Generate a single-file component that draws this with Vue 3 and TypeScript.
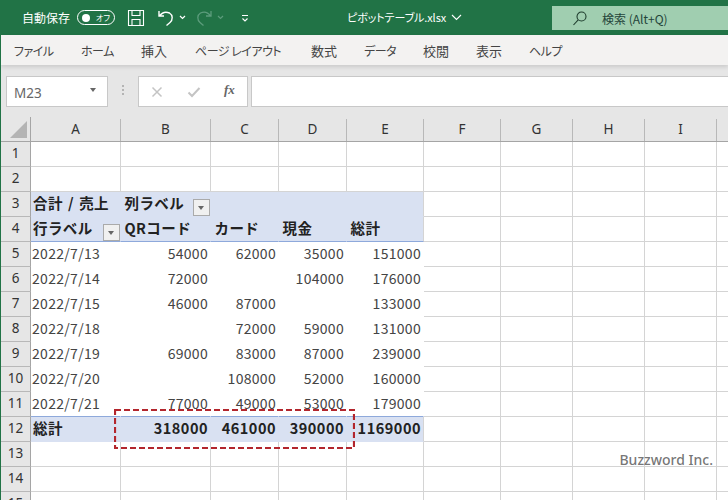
<script setup lang="ts">
const cols = ['A','B','C','D','E','F','G','H','I','']
type Cell = { t?: string; right?: boolean; bold?: boolean; filter?: boolean }
const blank: Cell = {}
const dataRows: [string, string, string, string, string][] = [
  ['2022/7/13','54000','62000','35000','151000'],
  ['2022/7/14','72000','','104000','176000'],
  ['2022/7/15','46000','87000','','133000'],
  ['2022/7/18','','72000','59000','131000'],
  ['2022/7/19','69000','83000','87000','239000'],
  ['2022/7/20','','108000','52000','160000'],
  ['2022/7/21','77000','49000','53000','179000'],
]
const rows: { n: number; kind: string; cells: Cell[] }[] = []
rows.push({ n: 1, kind: '', cells: [] })
rows.push({ n: 2, kind: '', cells: [] })
rows.push({ n: 3, kind: 'pv', cells: [{ t: '合計 / 売上', bold: true }, { t: '列ラベル', bold: true, filter: true }, blank, blank, blank] })
rows.push({ n: 4, kind: 'pv hd', cells: [{ t: '行ラベル', bold: true, filter: true }, { t: 'QRコード', bold: true }, { t: 'カード', bold: true }, { t: '現金', bold: true }, { t: '総計', bold: true }] })
dataRows.forEach((r, i) => rows.push({ n: 5 + i, kind: i === 6 ? 'data last' : 'data', cells: [{ t: r[0] }, ...r.slice(1).map((t) => ({ t, right: true }))] }))
rows.push({ n: 12, kind: 'pv tot', cells: [{ t: '総計', bold: true }, { t: '318000', right: true, bold: true }, { t: '461000', right: true, bold: true }, { t: '390000', right: true, bold: true }, { t: '1169000', right: true, bold: true }] })
for (const n of [13, 14, 15]) rows.push({ n, kind: '', cells: [] })
const tabs = ['ファイル','ホーム','挿入','ページ レイアウト','数式','データ','校閲','表示','ヘルプ']
</script>

<template>
  <div class="app">
    <header class="title">
      <span class="autosave">自動保存</span>
      <span class="toggle"><i class="dot"></i><em>オフ</em></span>
      <svg class="ic save" width="18" height="18" viewBox="0 0 18 18" fill="none" stroke="#fff" stroke-width="1.1"><path d="M1.500 1.500h15v15h-15zM5 1.500v5h8v-5M5 16.500v-6h8v6"/></svg>
      <svg class="ic undo" width="18" height="18" viewBox="0 0 18 18" fill="none" stroke="#fff" stroke-width="1.4"><path d="M2 2v5h5M2.500 7C5 3.500 9 2.500 12.500 4c3.500 2 3.500 7 .5 9.500l-3.500 3"/></svg>
      <svg class="chev" width="7" height="5" viewBox="0 0 7 5" fill="none" stroke="#fff" stroke-width="1.2"><path d="M1 1l2.500 2.500L6 1"/></svg>
      <svg class="ic redo" width="18" height="18" viewBox="0 0 18 18" fill="none" stroke="#5c9c7c" stroke-width="1.3"><path d="M16 2v5h-5M15.500 7C13 3.500 9 2.500 5.500 4c-3.500 2-3.500 7-.5 9.500l3.500 3"/></svg>
      <svg class="chev dim" width="7" height="5" viewBox="0 0 7 5" fill="none" stroke="#5c9c7c" stroke-width="1.2"><path d="M1 1l2.500 2.500L6 1"/></svg>
      <svg class="custom" width="8" height="8" viewBox="0 0 8 8" fill="none" stroke="#fff" stroke-width="1.1"><path d="M1 1.500h6M1.500 4.500L4 7l2.500-2.500"/></svg>
      <span class="file">ピボットテーブル.xlsx</span>
      <svg class="filechev" width="11" height="7" viewBox="0 0 11 7" fill="none" stroke="#fff" stroke-width="1.1"><path d="M1 1l4.500 4.500L10 1"/></svg>
      <div class="search">
        <svg width="16" height="16" viewBox="0 0 16 16" fill="none" stroke="#1f3d2e" stroke-width="1.1"><circle cx="9.500" cy="6.500" r="4.500"/><path d="M6.200 9.800L1.500 15"/></svg>
        <span>検索 (Alt+Q)</span>
      </div>
    </header>
    <nav class="tabs"><span v-for="t in tabs" :key="t">{{ t }}</span></nav>
    <section class="formula">
      <div class="namebox"><span>M23</span><i class="tri"></i></div>
      <div class="grip"><i></i><i></i><i></i></div>
      <div class="fbtns">
        <svg width="12" height="12" viewBox="0 0 12 12" stroke="#c4c4c4" stroke-width="1.500" fill="none"><path d="M1.500 1.500l9 9M10.500 1.500l-9 9"/></svg>
        <svg width="14" height="12" viewBox="0 0 14 12" stroke="#c4c4c4" stroke-width="2" fill="none"><path d="M1.500 6.500l3.500 3.500 7.500-8"/></svg>
        <span class="fx">fx</span>
      </div>
      <div class="finput"></div>
    </section>
    <main class="sheet">
      <div class="colhead">
        <div class="corner"><i></i></div>
        <div v-for="(c, ci) in cols" :key="ci" class="ch">{{ c }}</div>
      </div>
      <div v-for="r in rows" :key="r.n" class="row" :class="r.kind">
        <div class="rh">{{ r.n }}</div>
        <div v-for="(c, ci) in cols" :key="ci" class="cell">
          <template v-if="r.cells[ci]">
            <span class="txt" :class="{ right: r.cells[ci].right, bold: r.cells[ci].bold }">{{ r.cells[ci].t }}</span>
            <i v-if="r.cells[ci].filter" class="filter"></i>
          </template>
        </div>
      </div>
      <svg class="mark" width="241" height="40" viewBox="0 0 241 40" fill="none"><rect x="1" y="1" width="239" height="38" stroke="#b3262d" stroke-width="2.200" stroke-dasharray="6 3"/></svg>
      <div class="wm">Buzzword Inc.</div>
    </main>
  </div>
</template>

<style>
html, body { margin: 0; padding: 0; overflow: hidden; }
</style>

<style scoped>
.app { width: 728px; height: 500px; overflow: hidden; font-family: "Noto Sans CJK JP", "Noto Sans", sans-serif; background: #e6e6e6; border-left: 1px solid #217346; box-sizing: border-box; color: #333; }
.title { height: 35px; margin-left: -1px; background: #217346; color: #fff; display: flex; align-items: center; font-size: 12px; position: relative; font-feature-settings: "palt"; }
.autosave { margin-left: 22px; width: 55px; }
.toggle { width: 38px; height: 15px; border: 1px solid #fff; border-radius: 9px; box-sizing: border-box; display: flex; align-items: center; }
.dot { width: 8px; height: 8px; border-radius: 50%; background: #fff; margin-left: 4px; }
.toggle em { font-style: normal; font-size: 8px; margin-left: 6px; line-height: 1; }
.ic.save { margin-left: 12px; }
.ic.undo { margin-left: 12px; }
.chev { margin-left: 4px; }
.ic.redo { margin-left: 9px; }
.chev.dim { margin-left: 4px; }
.custom { margin-left: 17px; }
.file { position: absolute; left: 347px; top: 9px; font-size: 11px; letter-spacing: -.1px; line-height: 17px; white-space: nowrap; }
.filechev { position: absolute; left: 451px; top: 14px; }
.search { position: absolute; left: 552px; top: 6px; width: 176px; height: 24px; background: #a0ceb0; color: #24453a; display: flex; align-items: center; font-size: 12px; }
.search svg { margin-left: 20px; }
.search span { margin-left: 14px; }
.tabs { height: 30px; background: #f3f2f1; display: flex; align-items: center; font-size: 12px; letter-spacing: -.5px; color: #444; box-shadow: 0 2px 4px rgba(0,0,0,.12); position: relative; font-feature-settings: "palt"; }
.tabs span { white-space: nowrap; }
.tabs span:nth-child(1) { margin-left: 13px; width: 67px; }
.tabs span:nth-child(2) { width: 60px; }
.tabs span:nth-child(3) { width: 54px; font-size: 13px; letter-spacing: 0; }
.tabs span:nth-child(4) { width: 116px; }
.tabs span:nth-child(5) { width: 53px; font-size: 13px; letter-spacing: 0; }
.tabs span:nth-child(6) { width: 59px; }
.tabs span:nth-child(7) { width: 53px; font-size: 13px; letter-spacing: 0; }
.tabs span:nth-child(8) { width: 53px; font-size: 13px; letter-spacing: 0; }
.formula { height: 52px; display: flex; align-items: flex-start; padding: 11px 0 0 5px; box-sizing: border-box; background: #e6e6e6; }
.namebox { width: 102px; height: 31px; background: #fff; border: 1px solid #c8c8c8; box-sizing: border-box; display: flex; align-items: center; justify-content: space-between; padding: 3px 11px 0 7px; font-size: 13.500px; color: #666; font-family: "Noto Sans", sans-serif; }
.tri { width: 0; height: 0; border-left: 3.500px solid transparent; border-right: 3.500px solid transparent; border-top: 4px solid #666; margin-top: -6px; }
.grip { width: 30px; display: flex; flex-direction: column; align-items: center; gap: 2px; padding-top: 9px; }
.grip i { width: 2px; height: 2px; background: #b4b4b4; }
.fbtns { width: 110px; height: 31px; background: #fff; border: 1px solid #c8c8c8; box-sizing: border-box; display: flex; align-items: center; padding-left: 12px; margin-right: 3px; }
.fbtns svg:nth-child(2) { margin-left: 24px; }
.fx { font-family: "Liberation Serif", serif; font-style: italic; font-weight: 700; font-size: 13px; color: #666; margin-left: 23px; margin-top: -3px; }
.finput { flex: 1; height: 31px; background: #fff; border: 1px solid #c8c8c8; border-right: 0; box-sizing: border-box; }
.sheet { position: relative; background: #fff; font-size: 14px; }
.colhead, .row { display: grid; grid-template-columns: 30px 90px 90px 68px 68px 77px 77px 72px 72px 72px 72px; }
.colhead { height: 25px; background: #e6e6e6; border-bottom: 1px solid #a5a5a5; box-sizing: border-box; }
.corner { position: relative; border-right: 1px solid #a5a5a5; }
.corner i { position: absolute; right: 3px; bottom: 3px; width: 0; height: 0; border-left: 17px solid transparent; border-bottom: 17px solid #b4b4b4; }
.ch { display: flex; align-items: center; justify-content: center; color: #333; font-size: 13.500px; font-family: "Noto Sans", sans-serif; border-right: 1px solid #b8b8b8; box-sizing: border-box; margin-top: 2px; padding-bottom: 2px; }
.row { height: 25px; }
.rh { background: #e6e6e6; border-right: 1px solid #a5a5a5; border-bottom: 1px solid #b8b8b8; box-sizing: border-box; display: flex; align-items: center; justify-content: center; font-family: "Noto Sans", sans-serif; font-size: 13.500px; color: #333; padding-bottom: 2px; }
.cell { position: relative; border-right: 1px solid #d4d4d4; border-bottom: 1px solid #d4d4d4; box-sizing: border-box; display: flex; align-items: center; padding: 0 2px 2px 1px; white-space: nowrap; min-width: 0; }
.pv .cell:nth-child(-n+6) { background: #d9e1f2; border-right-color: #d9e1f2; border-bottom-color: #d9e1f2; }
.pv.hd .cell:nth-child(-n+6) { border-bottom-color: #8ea9db; }
.row.data .cell:nth-child(-n+6) { border-right-color: #fff; border-bottom-color: #fff; }
.row.data.last .cell:nth-child(-n+6) { border-bottom-color: #8ea9db; }
.row .cell:nth-child(6) { border-right-color: #d4d4d4; }
.txt { color: #444; line-height: 1; letter-spacing: .3px; }
.txt.right { margin-left: auto; }
.txt.bold { font-weight: 700; color: #222; font-size: 14.500px; letter-spacing: .4px; word-spacing: 1.500px; padding-left: 1px; }
.cell:not(:nth-child(2)) .txt.bold { padding-left: 2.500px; }
.cell .txt.right.bold { padding-left: 0; letter-spacing: .5px; }
.filter { position: absolute; right: 0; top: 7px; width: 17px; height: 17px; background: #f0f0f0; border: 1px solid #aaa; box-sizing: border-box; display: block; }
.filter::after { content: ""; position: absolute; left: 4px; top: 6px; border-left: 3.500px solid transparent; border-right: 3.500px solid transparent; border-top: 4px solid #666; }
.mark { position: absolute; left: 113px; top: 292px; }
.wm { position: absolute; right: 15px; top: 333px; font-size: 14px; font-weight: 500; color: rgba(110,110,110,.95); font-family: "Noto Sans", sans-serif; }
</style>
